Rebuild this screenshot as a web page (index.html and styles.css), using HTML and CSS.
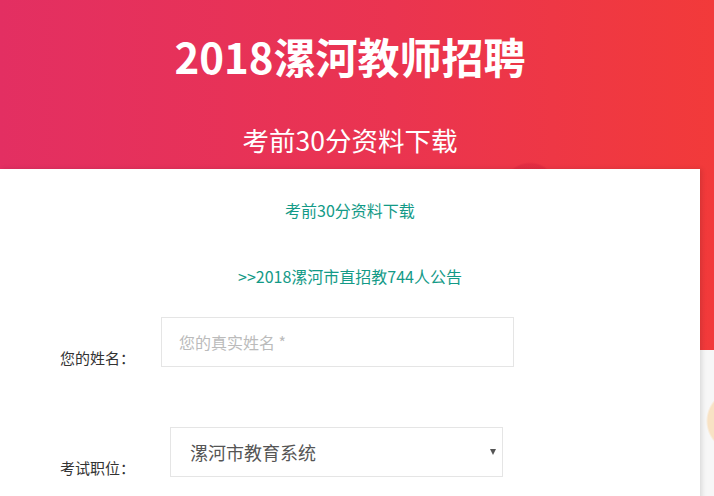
FILE: index.html
```html
<!DOCTYPE html>
<html>
	<head>
		<meta charset="utf-8">
		<title>2018漯河教师招聘</title>
		<link rel="stylesheet" href="styles.css">
	</head>
<body>
	<!-- Red banner with the page title -->
	<div class="head">
		<h1 class="title">2018漯河教师招聘</h1>
		<p class="sub">考前30分资料下载</p>
	</div>

	<div class="card">
		<p class="note">考前30分资料下载</p>
		<p class="notice"><a href="#">&gt;&gt;2018漯河市直招教744人公告</a></p>

		<form class="form">
			<div class="row">
				<label class="label" for="name">您的姓名：</label>
				<input class="field" id="name" type="text" placeholder="您的真实姓名 *">
			</div>
			<div class="row">
				<label class="label" for="job">考试职位：</label>
				<div class="pick">
					<select class="field choose" id="job">
						<option>漯河市教育系统</option>
					</select>
				</div>
			</div>
		</form>
	</div>
</body>
</html>
```

FILE: styles.css
```css
html, body {
	height: 100%;
}
body {
	margin: 0px;
	padding: 0px;
	font-family: "Noto Sans CJK SC", "Noto Sans", sans-serif;
	color: #333;
	text-spacing-trim: space-all;
	background:
		radial-gradient(circle at 738px 421px, #f8e2c4 0, #f8e2c4 30px, rgba(248,226,196,0) 32px) no-repeat,
		radial-gradient(circle at 530px 190px, rgba(205,30,60,0.35) 0, rgba(205,30,60,0.35) 26px, rgba(205,30,60,0) 28px) no-repeat,
		linear-gradient(90deg, #e32f62 0%, #ea3450 55%, #f23a3a 100%) no-repeat 0 0 / 100% 350px,
		#f7f7f7;
}
.head {
	width: 700px;
	height: 169px;
	box-sizing: border-box;
	padding-top: 30px;
	text-align: center;
	color: #fff;
}
.title {
	margin: 0;
	font-size: 42px;
	line-height: 52px;
	font-weight: bold;
}
.sub {
	margin: 41px 0 0 0;
	font-size: 26.5px;
	line-height: 34px;
}

.card {
	width: 700px;
	min-height: 400px;
	box-sizing: border-box;
	padding: 30px 0 40px 60px;
	background-color: #fff;
	box-shadow: 2px 0 5px rgba(0, 0, 0, 0.12);
}
.note, .notice {
	margin: 0;
	padding-right: 60px;
	text-align: center;
	font-size: 16px;
	line-height: 22px;
	color: #139a87;
}
.notice {
	margin-top: 44px;
}
.notice a {
	color: #139a87;
	text-decoration: none;
}

.form {
	margin-top: 30px;
	display: flex;
	flex-direction: column;
	gap: 60px;
}
.row {
	display: flex;
	align-items: flex-end;
}
.label {
	width: 101px;
	font-size: 15px;
	line-height: 18px;
	color: #333;
}
.field {
	width: 353px;
	height: 50px;
	box-sizing: border-box;
	margin: 0;
	padding: 0 17px;
	border: 1px solid #e5e5e5;
	border-radius: 0;
	outline: none;
	font-family: inherit;
	font-size: 16px;
	color: #555;
	background: #fff;
}
.field::placeholder {
	color: #bbb;
}
.pick {
	position: relative;
	margin-left: 9px;
}
.choose {
	width: 333px;
	padding-left: 19px;
	font-size: 18px;
	-webkit-appearance: none;
	appearance: none;
}
.pick::after {				/* the little arrow of the select */
	content: "";
	position: absolute;
	right: 7px;
	top: 22px;
	border-left: 3px solid transparent;
	border-right: 3px solid transparent;
	border-top: 6px solid #555;
	pointer-events: none;
}
```
